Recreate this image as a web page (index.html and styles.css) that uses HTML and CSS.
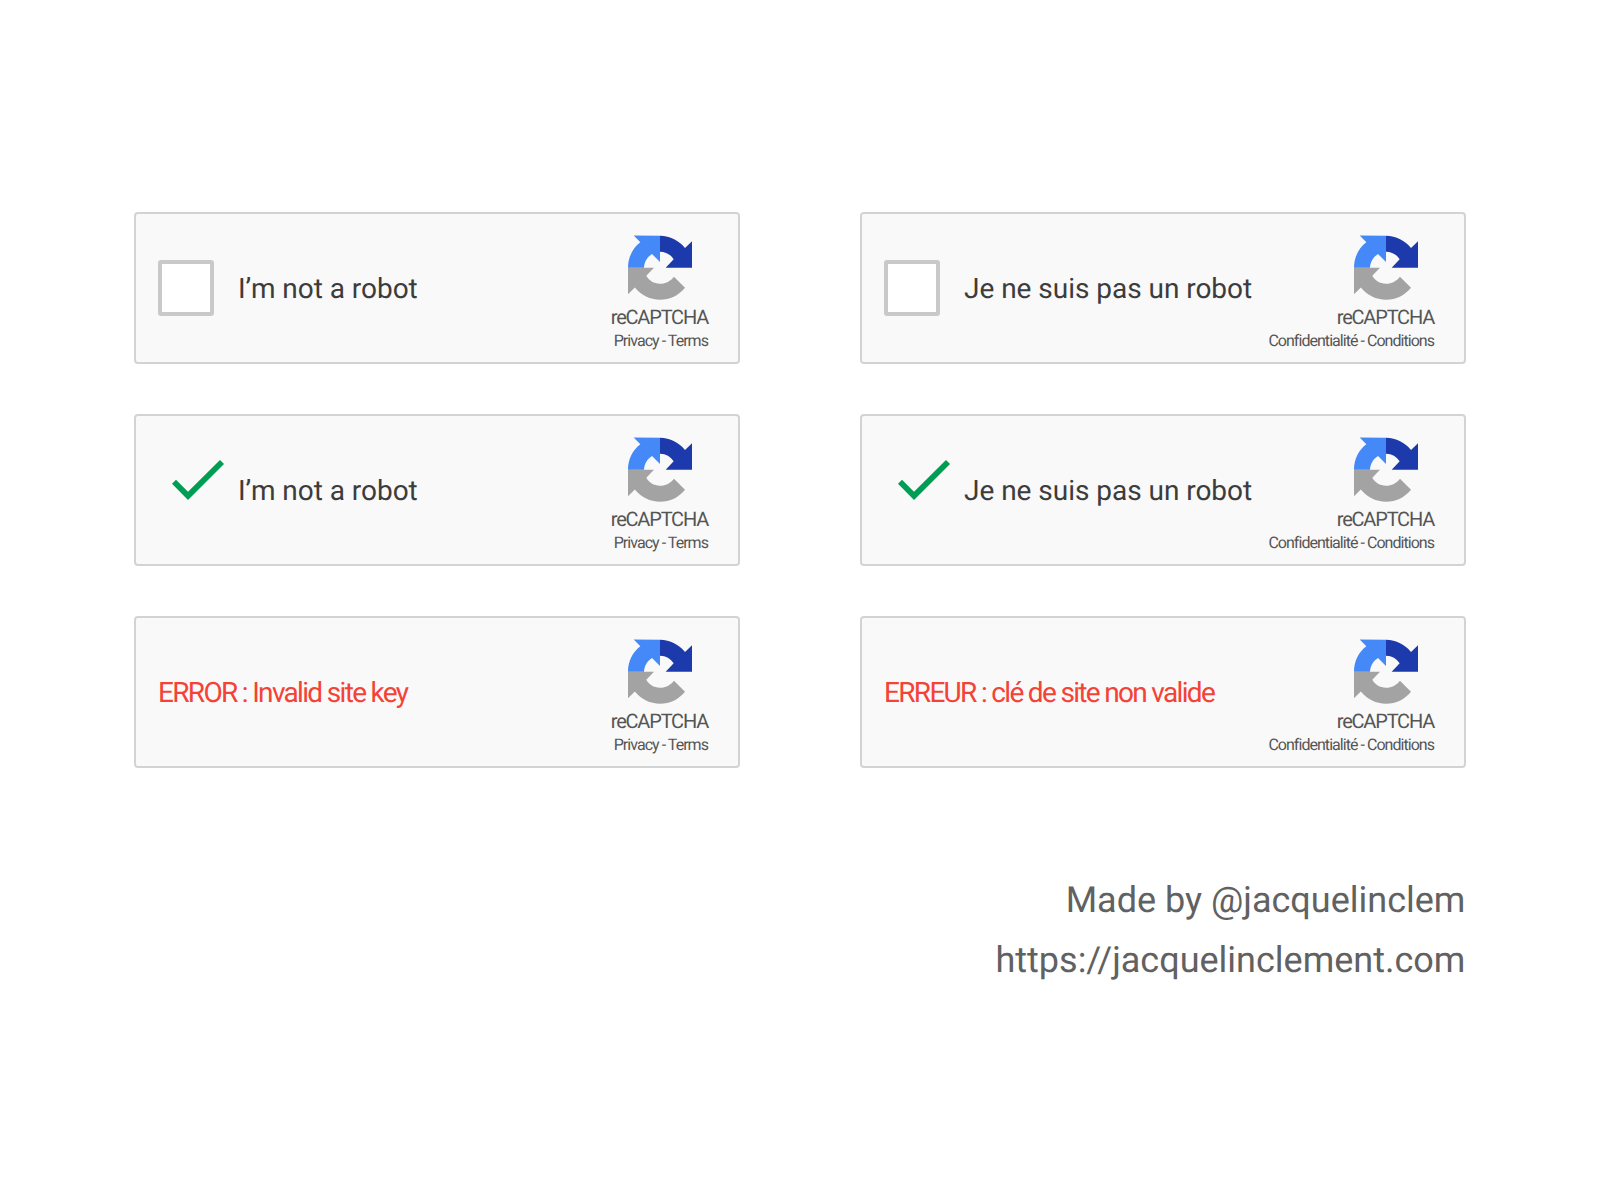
FILE: index.html
```html
<!DOCTYPE html>
<html lang="en">
<head>
<meta charset="utf-8">
<title>reCAPTCHA</title>
<link rel="stylesheet" href="styles.css">
</head>
<body>
<svg class="defs" aria-hidden="true">
  <symbol id="logo" viewBox="24 21 192 195">
    <path fill="#a3a3a3" d="M24 119H102L79 143.500C87 158 101 167 120 167C137 167 152 159 162 146L195 179C176 202 150 215 120 215C90 215 64 202 44.500 178.500L24 199Z"/>
    <path fill="#4489f7" d="M41 22.500L120 23V102L96 78C82 87 73 101 72 119.500H24C24 88 38 60 61 43Z"/>
    <path fill="#1c3aac" d="M120 23C151 24 177 37 195 60L216.500 39V119H137L161 94C152 80 138 71 120 71Z"/>
  </symbol>
  <symbol id="check" viewBox="156 180 156 120">
    <path fill="#009e55" d="M156 251L168 239L204 275L300 180L312 192L204 300Z"/>
  </symbol>
</svg>
<main class="page">
  <section class="grid">
    <article class="card">
      <span class="box"></span><span class="label">I’m not a robot</span>
      <div class="brand"><svg class="logo"><use href="#logo"/></svg><span class="name">reCAPTCHA</span><span class="links">Privacy - Terms</span></div>
    </article>
    <article class="card">
      <span class="box"></span><span class="label">Je ne suis pas un robot</span>
      <div class="brand"><svg class="logo"><use href="#logo"/></svg><span class="name">reCAPTCHA</span><span class="links">Confidentialité - Conditions</span></div>
    </article>
    <article class="card">
      <svg class="check"><use href="#check"/></svg><span class="label">I’m not a robot</span>
      <div class="brand"><svg class="logo"><use href="#logo"/></svg><span class="name">reCAPTCHA</span><span class="links">Privacy - Terms</span></div>
    </article>
    <article class="card">
      <svg class="check"><use href="#check"/></svg><span class="label">Je ne suis pas un robot</span>
      <div class="brand"><svg class="logo"><use href="#logo"/></svg><span class="name">reCAPTCHA</span><span class="links">Confidentialité - Conditions</span></div>
    </article>
    <article class="card">
      <span class="error">ERROR : Invalid site key</span>
      <div class="brand"><svg class="logo"><use href="#logo"/></svg><span class="name">reCAPTCHA</span><span class="links">Privacy - Terms</span></div>
    </article>
    <article class="card">
      <span class="error">ERREUR : clé de site non valide</span>
      <div class="brand"><svg class="logo"><use href="#logo"/></svg><span class="name">reCAPTCHA</span><span class="links">Confidentialité - Conditions</span></div>
    </article>
  </section>
  <footer class="credit">
    <div>Made by @jacquelinclem</div>
    <div>https://jacquelinclement.com</div>
  </footer>
</main>
</body>
</html>
```
FILE: styles.css
```css
* { box-sizing: border-box; }
body {
  margin: 0;
  background: #fff;
  font-family: Roboto, "Liberation Sans", sans-serif;
  text-rendering: geometricPrecision;
}
.defs { display: none; }
.page {
  width: 1600px;
  height: 1200px;
  padding: 212px 134px 0;
}
.grid {
  display: grid;
  grid-template-columns: 606px 606px;
  grid-auto-rows: 152px;
  gap: 50px 120px;
}
.card {
  display: flex;
  align-items: center;
  padding: 0 30px 0 22px;
  background: #f9f9f9;
  border: 2px solid #d3d3d3;
  border-radius: 4px;
  white-space: nowrap;
}
.box {
  width: 56px;
  height: 56px;
  margin-right: 24px;
  background: #fff;
  border: 4px solid #c9c9c9;
  border-radius: 3px;
}
.check {
  width: 52px;
  height: 40px;
  margin: 0 14px 20px;
}
.label {
  padding-top: 2px;
  font-size: 28px;
  line-height: 32px;
  letter-spacing: -0.03px;
  color: #3c3c3c;
}
.error {
  padding-top: 2px;
  font-size: 28px;
  line-height: 32px;
  letter-spacing: -0.06em;
  color: #f44336;
}
.brand {
  display: flex;
  flex-direction: column;
  align-items: flex-end;
  align-self: flex-start;
  margin-left: auto;
  padding-top: 21px;
  color: #555;
}
.logo {
  width: 64px;
  height: 65px;
  margin-right: 16px;
}
.name {
  margin-top: 5px;
  font-size: 20px;
  line-height: 24px;
  letter-spacing: -0.06em;
}
.links {
  font-size: 16px;
  line-height: 23px;
  letter-spacing: -0.06em;
}
.credit {
  padding: 102px 0.6px 0 0;
  font-size: 36px;
  line-height: 60px;
  color: #616161;
  text-align: right;
}
```
